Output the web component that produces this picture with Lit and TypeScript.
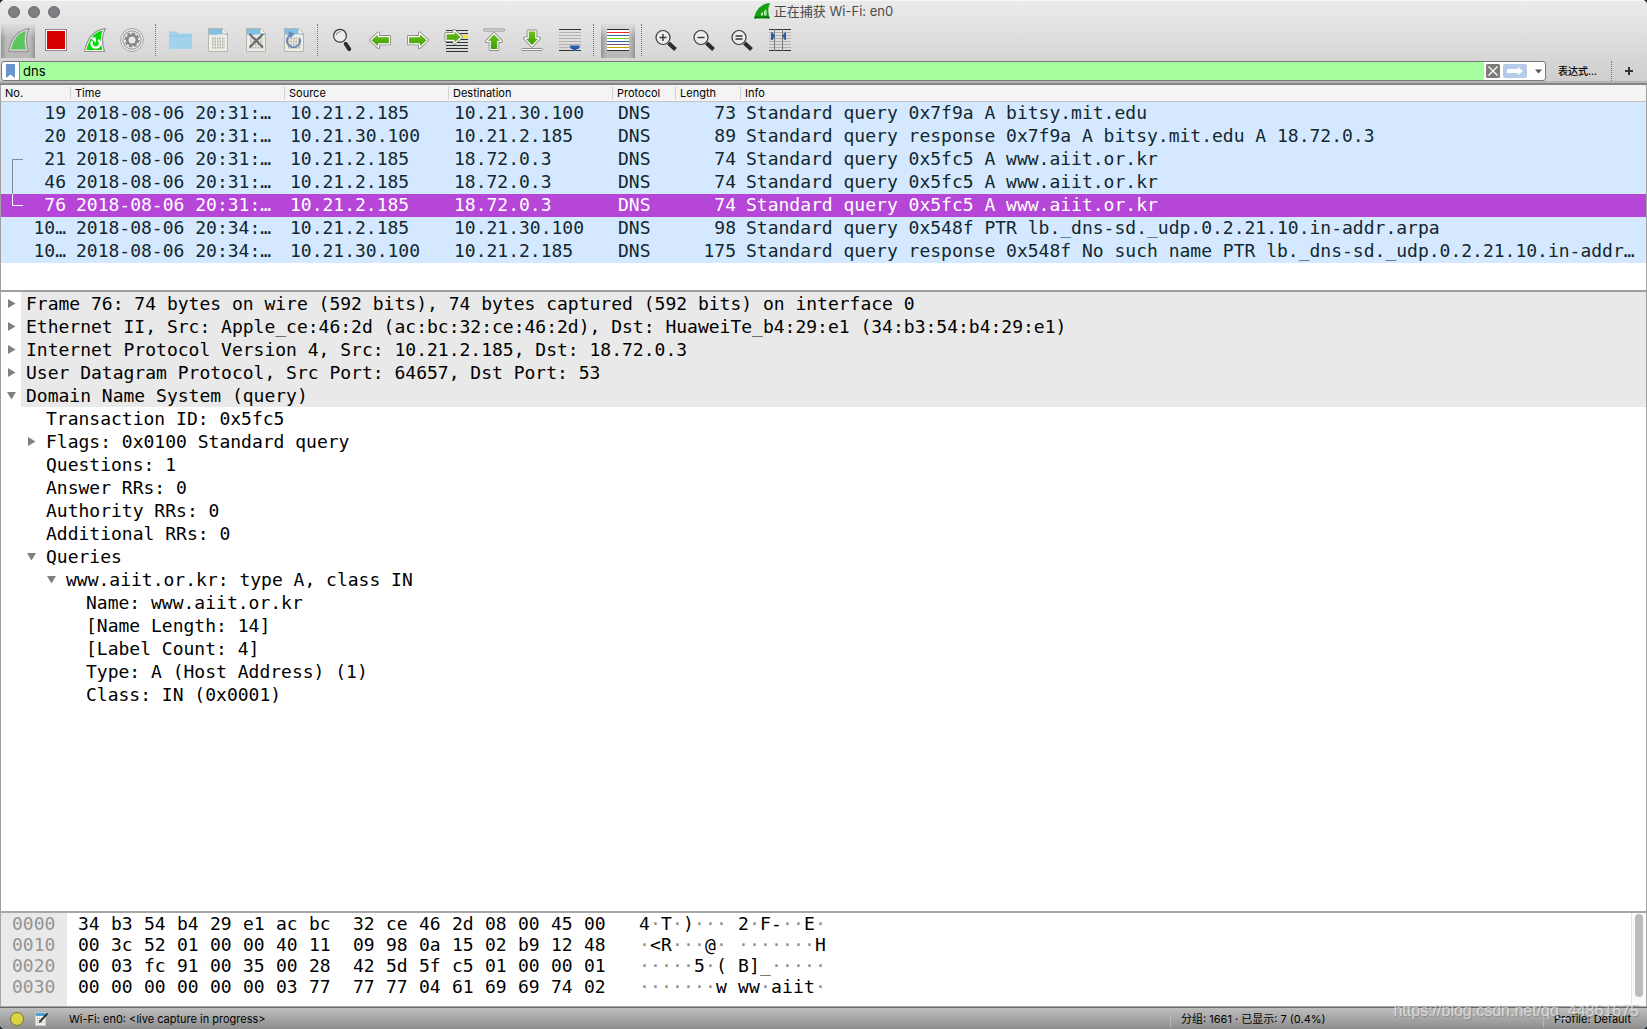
import { LitElement, html, css, svg, nothing, TemplateResult } from "lit";
import { customElement, state } from "lit/decorators.js";
import { classMap } from "lit/directives/class-map.js";

interface Packet {
  no: string;
  time: string;
  src: string;
  dst: string;
  len: string;
  info: string;
  link?: "start" | "mid" | "end";
}

interface TreeRow {
  level: number;
  text: string;
  toggle?: "open" | "closed";
  layer?: boolean;
}

const PACKETS: Packet[] = [
  { no: "19", time: "2018-08-06 20:31:…", src: "10.21.2.185", dst: "10.21.30.100", len: "73", info: "Standard query 0x7f9a A bitsy.mit.edu" },
  { no: "20", time: "2018-08-06 20:31:…", src: "10.21.30.100", dst: "10.21.2.185", len: "89", info: "Standard query response 0x7f9a A bitsy.mit.edu A 18.72.0.3" },
  { no: "21", time: "2018-08-06 20:31:…", src: "10.21.2.185", dst: "18.72.0.3", len: "74", info: "Standard query 0x5fc5 A www.aiit.or.kr", link: "start" },
  { no: "46", time: "2018-08-06 20:31:…", src: "10.21.2.185", dst: "18.72.0.3", len: "74", info: "Standard query 0x5fc5 A www.aiit.or.kr", link: "mid" },
  { no: "76", time: "2018-08-06 20:31:…", src: "10.21.2.185", dst: "18.72.0.3", len: "74", info: "Standard query 0x5fc5 A www.aiit.or.kr", link: "end" },
  { no: "10…", time: "2018-08-06 20:34:…", src: "10.21.2.185", dst: "10.21.30.100", len: "98", info: "Standard query 0x548f PTR lb._dns-sd._udp.0.2.21.10.in-addr.arpa" },
  { no: "10…", time: "2018-08-06 20:34:…", src: "10.21.30.100", dst: "10.21.2.185", len: "175", info: "Standard query response 0x548f No such name PTR lb._dns-sd._udp.0.2.21.10.in-addr…" },
];

const TREE: TreeRow[] = [
  { level: 0, toggle: "closed", layer: true, text: "Frame 76: 74 bytes on wire (592 bits), 74 bytes captured (592 bits) on interface 0" },
  { level: 0, toggle: "closed", layer: true, text: "Ethernet II, Src: Apple_ce:46:2d (ac:bc:32:ce:46:2d), Dst: HuaweiTe_b4:29:e1 (34:b3:54:b4:29:e1)" },
  { level: 0, toggle: "closed", layer: true, text: "Internet Protocol Version 4, Src: 10.21.2.185, Dst: 18.72.0.3" },
  { level: 0, toggle: "closed", layer: true, text: "User Datagram Protocol, Src Port: 64657, Dst Port: 53" },
  { level: 0, toggle: "open", layer: true, text: "Domain Name System (query)" },
  { level: 1, text: "Transaction ID: 0x5fc5" },
  { level: 1, toggle: "closed", text: "Flags: 0x0100 Standard query" },
  { level: 1, text: "Questions: 1" },
  { level: 1, text: "Answer RRs: 0" },
  { level: 1, text: "Authority RRs: 0" },
  { level: 1, text: "Additional RRs: 0" },
  { level: 1, toggle: "open", text: "Queries" },
  { level: 2, toggle: "open", text: "www.aiit.or.kr: type A, class IN" },
  { level: 3, text: "Name: www.aiit.or.kr" },
  { level: 3, text: "[Name Length: 14]" },
  { level: 3, text: "[Label Count: 4]" },
  { level: 3, text: "Type: A (Host Address) (1)" },
  { level: 3, text: "Class: IN (0x0001)" },
];

const DUMP = [
  { offset: "0000", bytes: "34 b3 54 b4 29 e1 ac bc 32 ce 46 2d 08 00 45 00", text: "4·T·)···2·F-··E·" },
  { offset: "0010", bytes: "00 3c 52 01 00 00 40 11 09 98 0a 15 02 b9 12 48", text: "·<R···@········H" },
  { offset: "0020", bytes: "00 03 fc 91 00 35 00 28 42 5d 5f c5 01 00 00 01", text: "·····5·(B]_·····" },
  { offset: "0030", bytes: "00 00 00 00 00 00 03 77 77 77 04 61 69 69 74 02", text: "·······www·aiit·" },
];

/* Toolbar glyphs share a 34 x 34 box. */
const icon = (body: unknown) =>
  html`<svg class="icon" viewBox="0 0 34 34" width="34" height="34" aria-hidden="true">${body}</svg>`;

const FIN = "M7.5 27.5C10 15 16 6 28.3 4.6C24.6 11 24.8 19 27.5 27.5Z";

const lines = (from: number, colors: string[]) =>
  colors.map((c, i) => svg`<path d=${`M6 ${from + i * 3}.5H28`} stroke=${c} stroke-width="1"/>`);

const sheet = svg`
  <path d="M7.5 4.5H21.5L26.5 9.5V27.5H7.5Z" fill="#eeeee6" stroke="#b4b6b0"/>
  <path d="M8 5H21V9.5H26V11C20 9 14 12 8 10.5Z" fill="#7fc0e4"/>
  <path d="M21.5 4.5V9.5H26.5Z" fill="#f7f7f4" stroke="#b4b6b0" stroke-width=".6"/>
  <path d="M11 14.5H24M11 17.5H24M11 20.5H24M11 23.5H24" stroke="#b0b1a9" stroke-width="2" stroke-dasharray="1.5 1"/>`;

const lens = (inner: unknown) => svg`
  <path d="M19.5 19L26.5 25.5" stroke="#2a2d30" stroke-width="4"/>
  <circle cx="14" cy="13.5" r="7" fill="#ececec" stroke="#34383b" stroke-width="1.2"/>${inner}`;

const arrow = (d: string) => svg`
  <path d=${d} fill="#fff" stroke="#8c8c88" stroke-width="3" stroke-linejoin="round"/>
  <path d=${d} fill="url(#leaf)" stroke="#fff" stroke-width="1.2" stroke-linejoin="round"/>`;

const leaf = svg`<defs><linearGradient id="leaf" x1="0" y1="0" x2="0" y2="1">
  <stop offset="0" stop-color="#6cc31c"/><stop offset="1" stop-color="#419c02"/></linearGradient></defs>`;

const I = {
  start: icon(svg`
    <path d=${FIN} fill="#dcdcdc" stroke="#9b9b9b" stroke-width="1.4" stroke-linejoin="round"/>
    <path d="M10 25.5C12.3 15.5 17 8.6 25.2 7C23 12.5 23.2 19 25 25.5Z" fill="#5cc65e"/>`),
  stop: icon(svg`<rect x="6.5" y="5.5" width="21" height="21" fill="#fff" stroke="#8d8d8d"/><rect x="8" y="7" width="18" height="18" fill="#d90000"/>`),
  restart: icon(svg`
    <path d=${FIN} fill="#fff" stroke="#929292" stroke-width="1.2" stroke-linejoin="round"/>
    <path d="M9.4 26C12 15.5 17 8.2 25.6 6.6C23.2 12.5 23.4 19 25.4 26Z" fill="#08d808"/>
    <path d="M15.2 17.2A4.2 4.2 0 1 0 21.2 16" fill="none" stroke="#fff" stroke-width="2.4"/>
    <path d="M13.2 13.4H18.8V18.8Z" fill="#fff"/>`),
  options: icon(svg`
    <circle cx="17" cy="16" r="11.4" fill="#f4f4f4" stroke="#a0a0a0" stroke-width="1"/>
    <circle cx="17" cy="16" r="9.2" fill="#e6e6e6" stroke="#a2a2a2" stroke-width="1.2"/>
    <circle cx="17" cy="16" r="6.6" fill="none" stroke="#858585" stroke-width="1.8" stroke-dasharray="3 2.18"/>
    <circle cx="17" cy="16" r="4.8" fill="#e9e9e9" stroke="#858585" stroke-width="2.6"/>`),
  folder: icon(svg`
    <path d="M6 8.5Q6 7.5 7 7.5H13L15 9.5H28Q29 9.5 29 10.5V24Q29 25 28 25H7Q6 25 6 24Z" fill="#a3d3ec"/>
    <path d="M6 12H29" stroke="#8dc4e2" stroke-width="1"/>`),
  save: icon(sheet),
  close: icon(svg`${sheet}<path d="M10.5 10L24 23.5M24 10L10.5 23.5" stroke="#66696b" stroke-width="2"/>`),
  reload: icon(svg`${sheet}<path d="M14 10.6A6.6 6.6 0 1 0 22.8 14.6" fill="none" stroke="#6c86b4" stroke-width="2"/><path d="M11 7.2L17.8 9.4L13.6 14.2Z" fill="#6c86b4"/>`),
  find: icon(svg`
    <path d="M19.6 18.4L21 20.5" stroke="#33373a" stroke-width="2"/>
    <path d="M20.8 20L24.2 25.2" stroke="#2a2d30" stroke-width="4" stroke-linecap="round"/>
    <circle cx="15" cy="11.8" r="6.4" fill="#ededed" stroke="#34383b" stroke-width="1.2"/>
    <path d="M11.2 11A4.4 4.4 0 0 1 15.6 7.6" fill="none" stroke="#777" stroke-width=".9"/>`),
  back: icon(svg`${leaf}${arrow("M7.5 16.2L15.5 9V12.6H26.5V19.8H15.5V23.4Z")}`),
  forward: icon(svg`${leaf}${arrow("M26.5 16.2L18.5 9V12.6H7.5V19.8H18.5V23.4Z")}`),
  goto: icon(svg`${leaf}
    <path d="M7 6.5H29M7 9.5H29M7 15.5H29M7 18.5H29M7 21.5H29M7 24.5H29M7 27.5H29" stroke="#2e3336"/>
    <rect x="22" y="11" width="7" height="3" fill="#fbe12d"/>
    ${arrow("M22.5 13L15 6.4V9.6H7V16.4H15V19.6Z")}`),
  first: icon(svg`${leaf}<rect x="6.5" y="5" width="21" height="2" rx="1" fill="#fff" stroke="#8c8c88"/>
    ${arrow("M17 9.5L24.5 17.4H20.8V25.5H13.2V17.4H9.5Z")}`),
  last: icon(svg`${leaf}<rect x="6.5" y="24.5" width="21" height="2" rx="1" fill="#fff" stroke="#8c8c88"/>
    ${arrow("M17 22L24.5 14.1H20.8V7H13.2V14.1H9.5Z")}`),
  scroll: icon(svg`${lines(5, ["#2e3336", "#b2b3ae", "#b2b3ae", "#b2b3ae", "#b2b3ae", "#b2b3ae", "#b2b3ae", "#2e3336"])}
    <path d="M16.5 21.5H27L25.5 25H23.5V27H20V25H18Z" fill="#2b5ba8"/>`),
  colorize: icon(svg`<rect x="6" y="5" width="22" height="22" fill="#fff"/>
    ${lines(5, ["#2e3336", "#ef2929", "#3465a4", "#73d216", "#3465a4", "#75507b", "#c4a000", "#2e3336"])}`),
  zoomIn: icon(lens(svg`<path d="M10.5 13.5H17.5M14 10V17" stroke="#34383b" stroke-width="1.4"/>`)),
  zoomOut: icon(lens(svg`<path d="M10.5 13.5H17.5" stroke="#34383b" stroke-width="1.4"/>`)),
  zoomReset: icon(lens(svg`<path d="M10.5 12H17.5M10.5 15H17.5" stroke="#34383b" stroke-width="1.3"/>`)),
  columns: icon(svg`${lines(5, ["#2e3336", "#b2b3ae", "#b2b3ae", "#b2b3ae", "#b2b3ae", "#b2b3ae", "#b2b3ae", "#2e3336"])}
    <path d="M11.5 5V27M19.5 5V27" stroke="#777b78"/>
    <path d="M8 8.5H9.5L12 12L9.5 16H8ZM23 8.5H21.8L19.4 12L21.8 16H23Z" fill="#2b5ba8"/>`),
};

type ToolId = keyof typeof I;
const TOOLS: [ToolId, string][][] = [
  [["start", "Start"], ["stop", "Stop"], ["restart", "Restart"], ["options", "Options"]],
  [["folder", "Open"], ["save", "Save"], ["close", "Close"], ["reload", "Reload"]],
  [["find", "Find"], ["back", "Back"], ["forward", "Forward"], ["goto", "Go to packet"], ["first", "First packet"], ["last", "Last packet"], ["scroll", "Auto scroll"]],
  [["colorize", "Colorize"]],
  [["zoomIn", "Zoom in"], ["zoomOut", "Zoom out"], ["zoomReset", "Normal size"], ["columns", "Resize columns"]],
];

@customElement("app-root")
export class AppRoot extends LitElement {
  @state() private selected = 4;
  @state() private filter = "dns";

  static styles = css`
    :host {
      display: block;
      min-height: 100vh;
      background: #17242e;
      font-family: Inter, "Noto Sans CJK SC", sans-serif;
      font-size: 11px;
      color: #000;
    }
    * { box-sizing: border-box; }
    button {
      appearance: none;
      border: 0;
      padding: 0;
      margin: 0;
      background: none;
      font: inherit;
      color: inherit;
    }
    svg { display: block; }
    .window {
      display: flex;
      flex-direction: column;
      min-height: 100vh;
      border-radius: 5px;
      overflow: hidden;
      background: #fff;
    }
    .chrome { background: linear-gradient(#ebebeb, #cdcdcd); border-top: 1px solid #f6f6f6; }
    .titlebar { display: grid; grid-template-columns: 1fr auto 1fr; align-items: center; height: 21px; }
    .lights { display: flex; gap: 8px; padding-left: 8px; }
    .light { width: 12px; height: 12px; border-radius: 50%; background: #7f7f83; border: 1px solid #6d6d71; }
    .title { display: flex; align-items: center; gap: 4px; padding-bottom: 2px; font-size: 13px; line-height: 18px; color: #4a4a4a; font-weight: 400; margin: 0; }
    .toolbar { display: flex; gap: 4px; padding: 2px 1px 3px; }
    .tool { width: 34px; height: 34px; }
    .tool.pressed {
      background:
        linear-gradient(#dedede, rgba(222, 222, 222, 0) 40%),
        linear-gradient(to right, rgba(0, 0, 0, .2), rgba(0, 0, 0, 0) 16%, rgba(0, 0, 0, 0) 84%, rgba(0, 0, 0, .2)),
        rgba(0, 0, 0, .14);
    }
    .divider { width: 6px; padding-left: 2px; }
    .divider::before { content: ""; display: block; border-left: 1px dotted #777; height: 32px; }
    .filterbar { display: flex; align-items: center; padding: 0 1px; }
    .filter {
      flex: 1;
      display: flex;
      height: 20px;
      border: 1px solid #787878;
      border-radius: 3px;
      background: #fff;
      overflow: hidden;
    }
    .bookmark { width: 18px; border-right: 1px solid #8a8a8a; display: grid; place-items: center; }
    .filter input {
      flex: 1;
      min-width: 0;
      border: 0;
      outline: 0;
      padding: 0 3px;
      background: #a5ff9f;
      font: 13px/18px Inter, sans-serif;
      color: #000;
    }
    .filter-actions { display: flex; align-items: center; gap: 3px; padding-left: 2px; }
    .expression { padding: 0 12px; font-size: 10px; line-height: 20px; font-weight: 500; }
    .bar-divider { height: 20px; border-left: 1px dotted #777; margin-left: 2px; }
    .add { width: 34px; height: 20px; display: grid; place-items: center; }
    .edge { height: 4px; background: linear-gradient(#b4b4b4 50%, #858585 50%); }

    .packets { border: solid #a0a0a0; border-width: 0 1px; padding-bottom: 27px; }
    table { width: 100%; border-collapse: separate; border-spacing: 0; table-layout: fixed; }
    .c-no { width: 70px; }
    .c-time { width: 214px; }
    .c-addr { width: 164px; }
    .c-proto { width: 63px; }
    .c-len { width: 65px; }
    th {
      height: 17px;
      padding: 0 0 0 4px;
      background: #f4f4f4;
      border-bottom: 1px solid #c4c4c4;
      font-size: 11px;
      line-height: 16px;
      font-weight: 400;
      text-align: left;
    }
    .head { display: block; height: 12px; line-height: 12px; border-right: 1px solid #d0d0d0; }
    th:last-child .head { border-right: 0; }
    td {
      height: 23px;
      padding: 0 5px 2px;
      font: 18px/21px "DejaVu Sans Mono", monospace;
      color: #12272e;
      background: #d4e9ff;
      white-space: pre;
      overflow: hidden;
    }
    .selected td { background: #b646d8; color: #fff; }
    td:first-child { padding-bottom: 0; }
    .num { text-align: right; }
    .no-cell { display: flex; justify-content: flex-end; height: 23px; }
    .bracket { margin-left: 6px; margin-right: auto; color: #7d8a94; }
    .selected .bracket { color: #fff; }

    .details {
      flex: 1;
      border: solid #a0a0a0;
      border-width: 2px 1px 0;
      margin: 0;
      padding: 0;
      list-style: none;
      font: 18px/23px "DejaVu Sans Mono", monospace;
    }
    .node { display: flex; height: 23px; white-space: pre; }
    .indent { width: 20px; }
    .twist { width: 20px; display: grid; place-items: center; }
    .label { flex: 1; padding-left: 5px; }
    .layer .label { background: #e9e9e9; }

    .bytes { display: flex; border: solid #a8a8a8; border-width: 2px 1px 1px; height: 96px; font: 18px/21px "DejaVu Sans Mono", monospace; }
    .offsets { width: 66px; padding: 0 0 0 11px; background: #e9e9e9; color: #949494; }
    .dump { flex: 1; padding: 0 0 0 11px; }
    .line { display: flex; gap: 22px; height: 21px; }
    .halves { display: flex; gap: 11px; }
    .hex { display: grid; grid-template-columns: repeat(8, 33px); }
    .chars { display: grid; grid-template-columns: repeat(8, 11px); }
    .dim { color: #8c8c8c; }
    .scroll { width: 15px; border-left: 1px solid #e2e2e2; background: #fafafa; padding: 1px 3px; }
    .thumb { height: 83px; border-radius: 4px; background: #bcbcbc; }

    .status {
      position: relative;
      display: flex;
      align-items: center;
      height: 22px;
      border-top: 1px solid #666;
      background: linear-gradient(#bebebe, #8e8e8e);
      line-height: 16px;
    }
    .led { width: 14px; height: 14px; margin-left: 10px; border-radius: 50%; background: #d8d444; border: 1px solid #77752a; }
    .note { margin-left: 11px; }
    .source { margin-left: 20px; flex: 1; }
    .counts { width: 373px; border-left: 1px solid #b8b8b8; padding-left: 10px; }
    .profile { width: 104px; border-left: 1px solid #b8b8b8; padding-left: 10px; }
    .watermark {
      position: absolute;
      right: 8px;
      bottom: 8px;
      font: 16px/20px "Liberation Sans", sans-serif;
      color: rgba(255, 255, 255, .6);
      text-shadow: 1px 1px 1px rgba(90, 90, 90, .4);
    }
  `;

  private bracket(kind: Packet["link"]) {
    const d = kind === "start" ? "M11 11.5H.5V23" : kind === "mid" ? "M.5 0V23" : "M.5 0V11.5H11";
    return html`<svg class="bracket" width="11" height="23" viewBox="0 0 11 23" aria-hidden="true"><path d=${d} fill="none" stroke="currentColor"/></svg>`;
  }

  private packetRow(p: Packet, i: number) {
    return html`<tr class=${classMap({ selected: i === this.selected })} @click=${() => (this.selected = i)}>
      <td><div class="no-cell">${p.link ? this.bracket(p.link) : nothing}<span>${p.no}</span></div></td>
      <td>${p.time}</td>
      <td>${p.src}</td>
      <td>${p.dst}</td>
      <td>DNS</td>
      <td class="num">${p.len}</td>
      <td>${p.info}</td>
    </tr>`;
  }

  private treeRow(r: TreeRow): TemplateResult {
    const mark = r.toggle === "open" ? "M1 2H10L5.5 9.5Z" : "M2 1L9.5 5.5L2 10Z";
    return html`<li class=${classMap({ node: true, layer: !!r.layer })}>
      ${Array.from({ length: r.level }, () => html`<span class="indent"></span>`)}${r.toggle
        ? html`<button class="twist" aria-label=${r.text}><svg width="11" height="11" viewBox="0 0 11 11"><path d=${mark} fill="#808080"/></svg></button>`
        : html`<span class="twist"></span>`}<span class="label">${r.text}</span>
    </li>`;
  }

  private dumpLine(bytes: string, text: string) {
    const hex = bytes.split(" ");
    const half = (a: number) => html`<div class="hex">${hex.slice(a, a + 8).map((b) => html`<span>${b}</span>`)}</div>`;
    const chars = (a: number) => html`<div class="chars">${[...text].slice(a, a + 8).map((c) => html`<span class=${c === "·" ? "dim" : ""}>${c}</span>`)}</div>`;
    return html`<div class="line">
      <div class="halves">${half(0)}${half(8)}</div>
      <div class="halves">${chars(0)}${chars(8)}</div>
    </div>`;
  }

  render() {
    return html`<div class="window">
      <header class="chrome">
        <div class="titlebar">
          <div class="lights"><span class="light"></span><span class="light"></span><span class="light"></span></div>
          <h1 class="title">
            <svg width="16" height="16" viewBox="0 0 16 16" aria-hidden="true">
              <path d="M0 15.5C2 6 7 .8 16 0C13.6 5 14 10.5 15.5 15.5Z" fill="#12a012"/>
              <path d="M0 15.5C5 14.6 11 14.6 15.5 15.5V13.5H1Z" fill="#0b6e0b"/>
              <path d="M7 13V10L9 9V12ZM10 12.5V8L12.5 6.5V12.5Z" fill="#b9e8b0"/>
            </svg>
            <span>正在捕获 Wi-Fi: en0</span>
          </h1>
        </div>
        <nav class="toolbar">
          ${TOOLS.map((group, g) => html`${g ? html`<span class="divider"></span>` : nothing}${group.map(
            ([id, label]) => html`<button class=${classMap({ tool: true, pressed: id === "start" || id === "colorize" })} aria-label=${label}>${I[id]}</button>`
          )}`)}
        </nav>
        <div class="filterbar">
          <div class="filter">
            <button class="bookmark" aria-label="Bookmarks"><svg width="9" height="14" viewBox="0 0 9 14"><path d="M0 0H9V14L4.5 10.5L0 14Z" fill="#6a94cc"/></svg></button>
            <input type="text" aria-label="Display filter" .value=${this.filter} @input=${(e: Event) => (this.filter = (e.target as HTMLInputElement).value)} />
            <div class="filter-actions">
              <button aria-label="Clear"><svg width="14" height="14" viewBox="0 0 14 14"><rect width="14" height="14" rx="1.5" fill="#7b7d79"/><path d="M2.5 2.5L11.5 11.5M11.5 2.5L2.5 11.5" stroke="#fff" stroke-width="1.3"/></svg></button>
              <button aria-label="Apply"><svg width="24" height="14" viewBox="0 0 24 14"><rect width="24" height="14" rx="2" fill="#b5cbe8"/><path d="M4 5H15V3L20 7L15 11V9H4Z" fill="#fff"/></svg></button>
              <button aria-label="Recent filters"><svg width="15" height="14" viewBox="0 0 15 14"><path d="M5 5.5H12L8.500 9.500Z" fill="#555"/></svg></button>
            </div>
          </div>
          <button class="expression">表达式...</button>
          <span class="bar-divider"></span>
          <button class="add" aria-label="Add"><svg width="8" height="8" viewBox="0 0 8 8"><path d="M4 0V8M0 4H8" stroke="#333" stroke-width="2"/></svg></button>
        </div>
        <div class="edge"></div>
      </header>

      <section class="packets">
        <table>
          <colgroup><col class="c-no" /><col class="c-time" /><col class="c-addr" /><col class="c-addr" /><col class="c-proto" /><col class="c-len" /><col /></colgroup>
          <thead><tr>${["No.", "Time", "Source", "Destination", "Protocol", "Length", "Info"].map((h) => html`<th><span class="head">${h}</span></th>`)}</tr></thead>
          <tbody>${PACKETS.map((p, i) => this.packetRow(p, i))}</tbody>
        </table>
      </section>

      <ul class="details">${TREE.map((r) => this.treeRow(r))}</ul>

      <section class="bytes">
        <div class="offsets">${DUMP.map((d) => html`<div>${d.offset}</div>`)}</div>
        <div class="dump">${DUMP.map((d) => this.dumpLine(d.bytes, d.text))}</div>
        <div class="scroll"><div class="thumb"></div></div>
      </section>

      <footer class="status">
        <span class="led"></span>
        <svg class="note" width="14" height="14" viewBox="0 0 14 14" aria-hidden="true">
          <rect x=".5" y=".5" width="10" height="13" fill="#eef0ea" stroke="#c8cac4"/>
          <path d="M1 1H10V4H1Z" fill="#4a9fd4"/><path d="M2 6.5H8M2 8.5H7M2 10.5H9" stroke="#a8aaa4" stroke-dasharray="1 1"/>
          <path d="M5 9.5L12.5 1.5" stroke="#2e3336" stroke-width="2"/><path d="M4 11L4.5 8.5L6.5 10Z" fill="#2e3336"/>
        </svg>
        <span class="source">Wi-Fi: en0: &lt;live capture in progress&gt;</span>
        <span class="counts">分组: 1661 · 已显示: 7 (0.4%)</span>
        <span class="profile">Profile: Default</span>
        <span class="watermark">https://blog.csdn.net/qq_44861675</span>
      </footer>
    </div>`;
  }
}
